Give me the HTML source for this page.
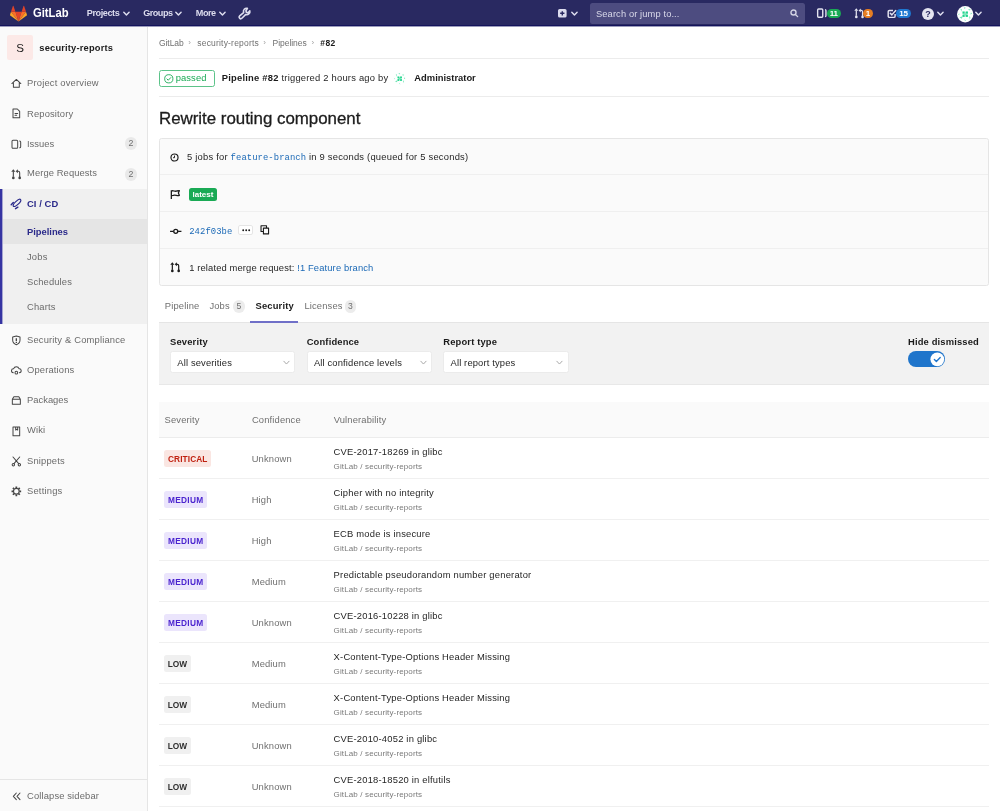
<!DOCTYPE html>
<html lang="en">
<head>
<meta charset="utf-8">
<title>Pipeline #82 · security-reports · GitLab</title>
<style>
*{box-sizing:border-box;margin:0;padding:0}
html,body{width:1000px;height:811px;overflow:hidden;background:#fff}
body{font-family:"Liberation Sans",sans-serif;font-size:9.4px;color:#262626;position:relative;letter-spacing:.15px}
#nav,#side,#main{will-change:transform}
#main{position:absolute;left:0;top:0;width:1000px;height:811px}
.abs{position:absolute;white-space:nowrap}
svg{position:absolute;overflow:visible}
#nav{position:absolute;left:0;top:0;width:1000px;height:26px;background:#292961;border-bottom:1px solid #14145c}
#nav:after{content:'';position:absolute;left:0;top:26px;width:1000px;height:1px;background:#9c9cbc}
#nav .t{position:absolute;color:#dcdcee;font-weight:bold;font-size:9.1px;top:7.9px;line-height:10px;white-space:nowrap;letter-spacing:-0.36px}
#brand{position:absolute;left:33.3px;top:5px;font-size:13.4px;font-weight:bold;color:#fff;line-height:16px;transform:scaleX(.84);transform-origin:0 0;letter-spacing:0}
#search{position:absolute;left:590px;top:3.2px;width:215px;height:20.6px;border-radius:2.5px;background:#4d4c80}
#search span{position:absolute;left:6px;top:6.2px;font-size:9.3px;line-height:11px;color:#dadaea;letter-spacing:.12px}
.pill{position:absolute;height:8.6px;border-radius:5px;color:#fff;font-size:8px;font-weight:bold;line-height:10.8px;text-align:center;top:9.2px;letter-spacing:-.2px;overflow:hidden}
#side{position:absolute;left:0;top:26.6px;width:148.1px;height:785px;background:#fafafa;border-right:1px solid #e5e5e5}
#side .it{position:absolute;left:27px;font-size:9.4px;line-height:12px;color:#6b6b6b;white-space:nowrap}
#side svg{left:10.5px}
.cnt{position:absolute;left:125px;width:12px;height:13.2px;border-radius:6px;background:#e9e9e9;color:#707070;font-size:8.8px;line-height:13.6px;text-align:center;letter-spacing:0}
a{color:#1b69b6;text-decoration:none}
b{color:#1a1a1a}
.hr{position:absolute;left:159px;width:830px;height:1px;background:#ececec}
.mono{font-family:"Liberation Mono",monospace;font-size:8.9px;letter-spacing:.07px}
.sev{position:absolute;height:16.8px;border-radius:2.5px;font-size:8.3px;font-weight:bold;line-height:18.2px;text-align:center}
.crit{background:#fae6e2;color:#c0200f;width:47.2px;letter-spacing:.09px;padding-left:.1px}
.med{background:#ebe5fc;color:#4b24cf;width:42.9px;letter-spacing:.29px;padding-left:.3px}
.low{background:#f0f0f0;color:#2e2e2e;width:26.5px;letter-spacing:0}
.row{position:absolute;left:159px;width:830px;height:41px;border-bottom:1px solid #f0f0f0}
.row .conf{position:absolute;left:92.7px;top:15.3px;font-size:9.4px;line-height:12px;color:#707070}
.row .vn{position:absolute;left:174.6px;top:8px;font-size:9.4px;line-height:12px;color:#1f1f1f;white-space:nowrap;letter-spacing:.21px}
.row .vp{position:absolute;left:174.6px;top:24.6px;font-size:8px;line-height:10px;color:#7a7a7a;white-space:nowrap;letter-spacing:.13px}
.row .sev{left:5.1px;top:12.3px}
</style>
</head>
<body>
<div id="nav">
<svg style="left:10.400px;top:5.800px" width="17" height="15.600" viewBox="0 0 36 33"><path fill="#e24329" d="M18 32.600l6.600-20.300H11.400z"/><path fill="#fc6d26" d="M18 32.600l-6.600-20.300H2.100z"/><path fill="#fca326" d="M2.100 12.300l-2 6.200a1.400 1.400 0 0 0 .5 1.500L18 32.600z"/><path fill="#e24329" d="M2.100 12.300h9.300L7.400.1a.7.7 0 0 0-1.300 0z"/><path fill="#fc6d26" d="M18 32.600l6.600-20.300h9.300z"/><path fill="#fca326" d="M33.900 12.300l2 6.200a1.400 1.400 0 0 1-.5 1.500L18 32.600z"/><path fill="#e24329" d="M33.900 12.300h-9.300L28.600.1a.7.7 0 0 1 1.300 0z"/></svg>
<div id="brand">GitLab</div>
<div class="t" style="left:86.800px;letter-spacing:-.42px">Projects</div><svg style="left:122.7px;top:11.4px" width="6.8" height="5.4" viewBox="0 0 6.8 5.4"><path d="M.8 1.200l2.650 2.850 2.650-2.850" fill="none" stroke="#dcdcee" stroke-width="1.45" stroke-linecap="round" stroke-linejoin="round"/></svg>
<div class="t" style="left:143.200px;letter-spacing:-.5px">Groups</div><svg style="left:174.5px;top:11.4px" width="6.8" height="5.4" viewBox="0 0 6.8 5.4"><path d="M.8 1.200l2.650 2.850 2.650-2.850" fill="none" stroke="#dcdcee" stroke-width="1.45" stroke-linecap="round" stroke-linejoin="round"/></svg>
<div class="t" style="left:195.800px;letter-spacing:-.48px">More</div><svg style="left:218.7px;top:11.4px" width="6.8" height="5.4" viewBox="0 0 6.8 5.4"><path d="M.8 1.200l2.650 2.850 2.650-2.850" fill="none" stroke="#dcdcee" stroke-width="1.45" stroke-linecap="round" stroke-linejoin="round"/></svg>
<svg style="left:238.400px;top:7.400px" width="13" height="12.400" viewBox="0 0 13.400 12.800"><path fill="none" stroke="#dcdcee" stroke-width="1.700" stroke-linejoin="round" stroke-linecap="round" d="M9.700 1.400a3.300 3.300 0 0 0-3.900 4.300L1.700 9.200a1.650 1.650 0 0 0 2.300 2.400l3.800-3.800a3.300 3.300 0 0 0 4.400-3.800L10.300 5.900 8.700 5.600 8.200 3.900z"/></svg>
<svg style="left:558px;top:9.200px" width="8.600" height="8.600" viewBox="0 0 16 16"><path fill="#dcdcee" fill-rule="evenodd" d="M3 0h10a3 3 0 0 1 3 3v10a3 3 0 0 1-3 3H3a3 3 0 0 1-3-3V3a3 3 0 0 1 3-3zm3.700 6.700H4v2.600h2.700V12h2.600V9.300H12V6.700H9.300V4H6.700z"/></svg><svg style="left:570.7px;top:11.4px" width="6.8" height="5.4" viewBox="0 0 6.8 5.4"><path d="M.8 1.200l2.650 2.850 2.650-2.850" fill="none" stroke="#dcdcee" stroke-width="1.45" stroke-linecap="round" stroke-linejoin="round"/></svg>
<div id="search"><span>Search or jump to...</span><svg style="left:199.500px;top:6.300px" width="8.600" height="8.600" viewBox="0 0 16 16"><path fill="none" stroke="#d3d3e3" stroke-width="2.600" stroke-linecap="round" d="M6.500 1.800a4.700 4.700 0 1 0 0 9.400a4.700 4.700 0 0 0 0-9.400zM10.200 10.200l4 4"/></svg></div>
<svg style="left:817.300px;top:8.400px" width="9.600" height="10.200" viewBox="0 0 15 16"><path fill="none" stroke="#e4e4f0" stroke-width="2.200" d="M2.500 1.500h5a1.500 1.500 0 0 1 1.500 1.500v10a1.500 1.500 0 0 1-1.500 1.500h-5a1.500 1.500 0 0 1-1.500-1.500V3a1.500 1.500 0 0 1 1.500-1.500zM12.500 2.500c1 0 1.500.8 1.500 1.500v8c0 .7-.5 1.500-1.500 1.500"/></svg>
<div class="pill" style="left:826.800px;width:14px;background:#1aaa55">11</div>
<svg style="left:853.500px;top:8.200px" width="10.500" height="10.800" viewBox="0 0 16 16"><path fill="#e4e4f0" d="M3.500 .3L6.600 4H0.400z"/><path stroke="#e4e4f0" stroke-width="1.9" d="M3.500 3.500v8"/><circle cx="3.500" cy="13.300" r="2" fill="#e4e4f0"/><path fill="none" stroke="#e4e4f0" stroke-width="1.9" d="M9.500 3.500h1.500a2 2 0 0 1 2 2V12"/><path fill="#e4e4f0" d="M10.300 .5v6L7 3.500z"/><circle cx="13" cy="13.300" r="2" fill="#e4e4f0"/></svg>
<div class="pill" style="left:862.800px;width:10.200px;background:#e67e22">1</div>
<svg style="left:887px;top:8.800px" width="9.600" height="9.600" viewBox="0 0 16 16"><path fill="none" stroke="#e4e4f0" stroke-width="2.400" d="M13.500 8.500V12a2 2 0 0 1-2 2H4a2 2 0 0 1-2-2V4.500a2 2 0 0 1 2-2h6"/><path fill="none" stroke="#e4e4f0" stroke-width="2.400" stroke-linecap="round" stroke-linejoin="round" d="M5.500 7.200l2.600 2.600L14.600 2.400"/></svg>
<div class="pill" style="left:896.200px;width:14.600px;background:#1f78d1">15</div>
<svg style="left:921.800px;top:7.600px" width="12" height="12" viewBox="0 0 16 16"><circle cx="8" cy="8" r="8" fill="#e4e4f0"/><text x="8" y="12.300" text-anchor="middle" font-family="Liberation Sans, sans-serif" font-weight="bold" font-size="12" fill="#292961">?</text></svg><svg style="left:936.5px;top:11.4px" width="6.8" height="5.4" viewBox="0 0 6.8 5.4"><path d="M.8 1.200l2.650 2.850 2.650-2.850" fill="none" stroke="#dcdcee" stroke-width="1.45" stroke-linecap="round" stroke-linejoin="round"/></svg>
<svg style="left:956.500px;top:5.600px" width="16.400" height="16.400" viewBox="0 0 24 24"><circle cx="12" cy="12" r="12" fill="#fdfffe"/><g fill="#1ed48c"><rect x="8" y="8" width="3.300" height="3.300"/><rect x="12.700" y="8" width="3.300" height="3.300"/><rect x="8" y="12.700" width="3.300" height="3.300"/><rect x="12.700" y="12.700" width="3.300" height="3.300"/></g><g fill="#6fe3b4"><path d="M5 4l2 .5-.5 4zM10 2l3 .5-2 2zM16 5l4-.5-1.500 2zM20.500 9.500l1.500 2-2.500 1zM17.500 15l2 1-.5 4zM11 19.500l2.500 2.500-2-.5zM3.500 16.500l5-1.500-1.500 3.500zM1.500 12l2.500-1-1 2zM11.300 9h1.400v6h-1.400zM9 11.300h6v1.400H9z"/></g></svg><svg style="left:975.3px;top:11.4px" width="6.8" height="5.4" viewBox="0 0 6.8 5.4"><path d="M.8 1.200l2.650 2.850 2.650-2.850" fill="none" stroke="#dcdcee" stroke-width="1.45" stroke-linecap="round" stroke-linejoin="round"/></svg>
</div>
<div id="side"><div style="position:absolute;left:7.300px;top:7.700px;width:25.400px;height:25.400px;border-radius:2px;background:#fce9e7;color:#2e2e2e;font-size:11.600px;line-height:26.200px;text-align:center;letter-spacing:0;color:#1a1a1a">S</div><div style="position:absolute;left:39.300px;top:15.200px;font-weight:bold;font-size:9.300px;line-height:12px;color:#1a1a1a;white-space:nowrap;letter-spacing:.19px">security-reports</div><svg style="top:50.7px" width="10.700" height="10.700" viewBox="0 0 16 16"><path fill="none" stroke="#444" stroke-width="1.500" stroke-linejoin="round" stroke-linecap="round" d="M1.300 8.300L8 2.200l6.700 6.100M3.600 7V13.700h8.800V7"/></svg><div class="it" style="top:50.4px;letter-spacing:0.19px">Project overview</div><svg style="top:81.0px" width="10.700" height="10.700" viewBox="0 0 16 16"><path fill="none" stroke="#444" stroke-width="1.500" stroke-linejoin="round" stroke-linecap="round" d="M3 1.500h6.500l3.500 3.500v9.500H3zM6 8.300h4M6 11h2.500"/></svg><div class="it" style="top:80.7px">Repository</div><svg style="top:111.5px" width="10.700" height="10.700" viewBox="0 0 16 16"><path fill="none" stroke="#444" stroke-width="1.500" stroke-linejoin="round" stroke-linecap="round" d="M3 2h5.500a1.500 1.500 0 0 1 1.500 1.500v9a1.500 1.500 0 0 1-1.500 1.500H3a1.500 1.500 0 0 1-1.500-1.500v-9A1.500 1.500 0 0 1 3 2zM13 3c1 0 1.500.7 1.500 1.500v7c0 .8-.5 1.500-1.500 1.500"/></svg><div class="it" style="top:111.2px;letter-spacing:0.02px">Issues</div><div class="cnt" style="top:110.200px">2</div><svg style="top:141.7px" width="10.700" height="10.700" viewBox="0 0 16 16"><path fill="#444" d="M3.500 .3L6.600 4H0.400z"/><path stroke="#444" stroke-width="1.6" d="M3.500 3.500v8"/><circle cx="3.500" cy="13.300" r="2" fill="#444"/><path fill="none" stroke="#444" stroke-width="1.6" d="M9.500 3.500h1.500a2 2 0 0 1 2 2V12"/><path fill="#444" d="M10.300 .5v6L7 3.500z"/><circle cx="13" cy="13.300" r="2" fill="#444"/></svg><div class="it" style="top:140.4px;letter-spacing:0.09px">Merge Requests</div><div class="cnt" style="top:140.500px">2</div><div style="position:absolute;left:0;top:162.200px;width:147.100px;height:135px;background:#f0f0f0"></div><div style="position:absolute;left:0;top:162.200px;width:2px;height:135px;background:#3634a2"></div><div style="position:absolute;left:2px;top:162.200px;width:1px;height:135px;background:#a6a5d1"></div><div style="position:absolute;left:3px;top:192.100px;width:144.100px;height:25px;background:#e5e5e5"></div><svg style="left:6px;top:167.400px" width="20" height="20" viewBox="0 0 20 20"><ellipse cx="11" cy="8.900" rx="4.900" ry="1.750" transform="rotate(-43 11 8.900)" fill="none" stroke="#2b2a8a" stroke-width="1.200"/><path d="M5.200 10.700l2.100-2.200M9.500 14.700l2.400-1.500" stroke="#2b2a8a" stroke-width="1.400" stroke-linecap="round"/></svg><div class="it" style="top:170.7px;color:#2b2a8a;font-weight:bold;letter-spacing:0.07px">CI / CD</div><div class="it" style="top:199.2px;color:#2b2a8a;font-weight:bold;letter-spacing:-0.02px">Pipelines</div><div class="it" style="top:224.2px;letter-spacing:0.17px">Jobs</div><div class="it" style="top:249.2px;letter-spacing:0.135px">Schedules</div><div class="it" style="top:274.2px;letter-spacing:0.19px">Charts</div><svg style="top:307.5px" width="10.700" height="10.700" viewBox="0 0 16 16"><path fill="none" stroke="#444" stroke-width="1.500" stroke-linejoin="round" stroke-linecap="round" d="M8 1.500l5.500 1.500v4.500c0 3.500-2.500 6-5.500 7-3-1-5.500-3.500-5.500-7V3z"/><path fill="#444" d="M7 5h2v4H7zM7 10h2v2H7z"/></svg><div class="it" style="top:307.2px;letter-spacing:0.17px">Security &amp; Compliance</div><svg style="top:338.0px" width="10.700" height="10.700" viewBox="0 0 16 16"><path fill="none" stroke="#444" stroke-width="1.500" stroke-linejoin="round" stroke-linecap="round" d="M3.500 11.500a3 3 0 0 1 .5-6 4.200 4.200 0 0 1 8 0 3 3 0 0 1 .5 6"/><circle cx="8" cy="11.500" r="2" fill="none" stroke="#444" stroke-width="1.500" stroke-linejoin="round" stroke-linecap="round"/></svg><div class="it" style="top:336.7px;letter-spacing:0.16px">Operations</div><svg style="top:368.2px" width="10.700" height="10.700" viewBox="0 0 16 16"><path fill="none" stroke="#444" stroke-width="1.500" stroke-linejoin="round" stroke-linecap="round" d="M2 6.500h12V14H2zM2 6.500L4.300 2.500h7.400L14 6.500"/></svg><div class="it" style="top:366.9px;letter-spacing:0.01px">Packages</div><svg style="top:398.5px" width="10.700" height="10.700" viewBox="0 0 16 16"><path fill="none" stroke="#444" stroke-width="1.500" stroke-linejoin="round" stroke-linecap="round" d="M3 1.500h10v13H3zM7 1.500V6l1.500-1L10 6V1.500"/></svg><div class="it" style="top:397.2px;letter-spacing:0.14px">Wiki</div><svg style="top:428.7px" width="10.700" height="10.700" viewBox="0 0 16 16"><path fill="none" stroke="#444" stroke-width="1.500" stroke-linejoin="round" stroke-linecap="round" d="M3 1.500l8.500 10M13 1.500l-8.500 10"/><circle cx="3.500" cy="13" r="1.800" fill="none" stroke="#444" stroke-width="1.500" stroke-linejoin="round" stroke-linecap="round"/><circle cx="12.500" cy="13" r="1.800" fill="none" stroke="#444" stroke-width="1.500" stroke-linejoin="round" stroke-linecap="round"/></svg><div class="it" style="top:428.4px;letter-spacing:0.16px">Snippets</div><svg style="top:459.0px" width="10.700" height="10.700" viewBox="0 0 16 16"><circle cx="8" cy="8" r="4.300" fill="none" stroke="#444" stroke-width="1.800"/><g stroke="#444" stroke-width="2.600"><path d="M8 .8v2.500M8 12.700v2.500M.8 8h2.500M12.700 8h2.500M2.900 2.900l1.800 1.800M11.300 11.300l1.800 1.800M2.900 13.100l1.800-1.800M11.300 4.700l1.800-1.800"/></g></svg><div class="it" style="top:457.9px;letter-spacing:0.2px">Settings</div><div style="position:absolute;left:0;top:752px;width:147.100px;height:1px;background:#e5e5e5"></div><svg style="top:763.5px" width="10.700" height="10.700" viewBox="0 0 16 16"><path fill="none" stroke="#444" stroke-width="1.500" stroke-linejoin="round" stroke-linecap="round" d="M8 3L3.500 8 8 13M13.500 3L9 8l4.500 5"/></svg><div class="it" style="top:763.2px;letter-spacing:0.135px">Collapse sidebar</div></div>
<div id="main"><div class="abs" style="left:159px;top:37.4px;font-size:8.5px;line-height:12px;color:#707070;font-weight:normal;letter-spacing:-0.07px;">GitLab</div><div class="abs" style="left:188.3px;top:37.0px;font-size:8px;line-height:12px;color:#a0a0a0;font-weight:normal;">›</div><div class="abs" style="left:197.3px;top:37.4px;font-size:8.5px;line-height:12px;color:#707070;font-weight:normal;letter-spacing:0.19px;">security-reports</div><div class="abs" style="left:263.3px;top:37.0px;font-size:8px;line-height:12px;color:#a0a0a0;font-weight:normal;">›</div><div class="abs" style="left:272.6px;top:37.4px;font-size:8.5px;line-height:12px;color:#707070;font-weight:normal;letter-spacing:-0.05px;">Pipelines</div><div class="abs" style="left:311.5px;top:37.0px;font-size:8px;line-height:12px;color:#a0a0a0;font-weight:normal;">›</div><div class="abs" style="left:320.3px;top:37.4px;font-size:8.5px;line-height:12px;color:#1a1a1a;font-weight:bold;letter-spacing:0.4px;">#82</div><div class="hr" style="top:58.300px"></div><div class="abs" style="left:159px;top:70px;width:55.600px;height:16.800px;border:1px solid #5cc389;border-radius:2.500px"></div><svg style="left:163.600px;top:73.600px" width="9.600" height="9.600" viewBox="0 0 14 14"><circle cx="7" cy="7" r="6" fill="none" stroke="#1aaa55" stroke-width="1.300"/><path d="M4.300 7.200l1.900 1.900 3.600-3.800" fill="none" stroke="#1aaa55" stroke-width="1.400" stroke-linecap="round" stroke-linejoin="round"/></svg><div class="abs" style="left:175.7px;top:72.4px;font-size:9.4px;line-height:12px;color:#1aaa55;font-weight:normal;letter-spacing:0.1px;">passed</div><div class="abs" style="left:221.7px;top:72.4px;font-size:9.4px;line-height:12px;color:#262626;font-weight:normal;letter-spacing:0.22px;"><b style="letter-spacing:.23px">Pipeline #82</b> triggered 2 hours ago by</div><svg style="left:393px;top:71.500px" width="13.400" height="13.400" viewBox="0 0 24 24"><circle cx="12" cy="12" r="12" fill="#fdfffe"/><g fill="#1ed48c"><rect x="8" y="8" width="3.300" height="3.300"/><rect x="12.700" y="8" width="3.300" height="3.300"/><rect x="8" y="12.700" width="3.300" height="3.300"/><rect x="12.700" y="12.700" width="3.300" height="3.300"/></g><g fill="#6fe3b4"><path d="M5 4l2 .5-.5 4zM10 2l3 .5-2 2zM16 5l4-.5-1.500 2zM20.500 9.500l1.500 2-2.500 1zM17.500 15l2 1-.5 4zM11 19.500l2.500 2.500-2-.5zM3.500 16.500l5-1.500-1.500 3.500zM1.500 12l2.500-1-1 2zM11.300 9h1.400v6h-1.400zM9 11.300h6v1.400H9z"/></g></svg><div class="abs" style="left:414.3px;top:72.4px;font-size:9.4px;line-height:12px;color:#1a1a1a;font-weight:bold;letter-spacing:0px;">Administrator</div><div class="hr" style="top:96px"></div><div class="abs" style="left:159px;top:108.0px;font-size:16.9px;line-height:22px;color:#1c1c1c;font-weight:normal;letter-spacing:-0.02px;-webkit-text-stroke:.3px #1c1c1c;">Rewrite routing component</div><div class="abs" style="left:159px;top:138px;width:830px;height:148px;background:#fafafa;border:1px solid #e5e5e5;border-radius:2.500px"></div><div class="abs" style="left:160px;top:174.3px;width:828px;height:1px;background:#efefef"></div><div class="abs" style="left:160px;top:210.8px;width:828px;height:1px;background:#efefef"></div><div class="abs" style="left:160px;top:247.8px;width:828px;height:1px;background:#efefef"></div><svg style="left:170.300px;top:152.600px" width="9" height="9" viewBox="0 0 14 14"><circle cx="7" cy="7" r="5.500" fill="none" stroke="#1a1a1a" stroke-width="1.800"/><path d="M7 4v3.300H4.800" fill="none" stroke="#1a1a1a" stroke-width="1.500"/></svg><div class="abs" style="left:187px;top:151.0px;font-size:9.4px;line-height:12px;color:#262626;font-weight:normal;letter-spacing:0.22px;">5 jobs for <a class="mono">feature-branch</a> in 9 seconds (queued for 5 seconds)</div><svg style="left:170.300px;top:188.500px" width="10.700" height="10.700" viewBox="0 0 16 16"><path fill="none" stroke="#1a1a1a" stroke-width="1.900" stroke-linejoin="round" d="M2 15V2M2 3c3-1.500 5 1.500 8 0l4-.5-1.500 3.500L14 9.500c-3 1.500-6-1.500-9 0L2 10"/></svg><div class="abs" style="left:189.200px;top:187.500px;width:27.600px;height:13px;border-radius:2.500px;background:#1aaa55;color:#fff;font-size:8px;font-weight:bold;line-height:13px;text-align:center;letter-spacing:0">latest</div><svg style="left:170px;top:225.500px" width="11.500" height="10.700" viewBox="0 0 17 16"><circle cx="8.500" cy="8" r="3" fill="none" stroke="#1a1a1a" stroke-width="2"/><path d="M0 8h5M12 8H17" stroke="#1a1a1a" stroke-width="2"/></svg><div class="abs" style="left:189.2px;top:224.6px;font-size:9.4px;line-height:12px;color:#262626;font-weight:normal;"><a class="mono">242f03be</a></div><div class="abs" style="left:238.300px;top:225px;width:14.800px;height:9.600px;border:1px solid #e5e5e5;border-radius:2px;background:#fff"></div><svg style="left:241.500px;top:228.800px" width="8.400" height="2.400" viewBox="0 0 8.400 2.400"><circle cx="1.200" cy="1.200" r=".95" fill="#1a1a1a"/><circle cx="4.200" cy="1.200" r=".95" fill="#1a1a1a"/><circle cx="7.200" cy="1.200" r=".95" fill="#1a1a1a"/></svg><svg style="left:260px;top:225.400px" width="9.600" height="9.600" viewBox="0 0 14 14"><path fill="none" stroke="#1a1a1a" stroke-width="1.600" stroke-linejoin="round" d="M5 4.500h7.500V13H5zM9.500 4V1H1.500v8.500H4.500"/></svg><svg style="left:170.300px;top:262px" width="10.700" height="10.700" viewBox="0 0 16 16"><path fill="#1a1a1a" d="M3.500 .3L6.600 4H0.400z"/><path stroke="#1a1a1a" stroke-width="1.8" d="M3.500 3.500v8"/><circle cx="3.500" cy="13.300" r="2" fill="#1a1a1a"/><path fill="none" stroke="#1a1a1a" stroke-width="1.8" d="M9.500 3.500h1.500a2 2 0 0 1 2 2V12"/><path fill="#1a1a1a" d="M10.300 .5v6L7 3.500z"/><circle cx="13" cy="13.300" r="2" fill="#1a1a1a"/></svg><div class="abs" style="left:189.2px;top:261.5px;font-size:9.4px;line-height:12px;color:#262626;font-weight:normal;letter-spacing:0.13px;">1 related merge request: <a>!1 Feature branch</a></div><div class="abs" style="left:164.8px;top:299.7px;font-size:9.4px;line-height:12px;color:#707070;font-weight:normal;">Pipeline</div><div class="abs" style="left:209.4px;top:299.7px;font-size:9.4px;line-height:12px;color:#707070;font-weight:normal;">Jobs</div><div class="abs" style="left:232.9px;top:300px;width:11.800px;height:13px;border-radius:6px;background:#ececec;color:#707070;font-size:8.600px;line-height:13.400px;text-align:center;letter-spacing:0">5</div><div class="abs" style="left:255.6px;top:299.7px;font-size:9.4px;line-height:12px;color:#1a1a1a;font-weight:bold;">Security</div><div class="abs" style="left:304.4px;top:299.7px;font-size:9.4px;line-height:12px;color:#707070;font-weight:normal;">Licenses</div><div class="abs" style="left:344.6px;top:300px;width:11.800px;height:13px;border-radius:6px;background:#ececec;color:#707070;font-size:8.600px;line-height:13.400px;text-align:center;letter-spacing:0">3</div><div class="hr" style="top:321.800px;background:#e5e5e5"></div><div class="abs" style="left:250px;top:321px;width:48.200px;height:2px;background:#7070c8"></div><div class="abs" style="left:159px;top:322.600px;width:830px;height:62.400px;background:#f2f2f2;border-bottom:1px solid #e8e8e8"></div><div class="abs" style="left:170.1px;top:335.8px;font-size:9.4px;line-height:12px;color:#1a1a1a;font-weight:bold;">Severity</div><div class="abs" style="left:170.1px;top:351.400px;width:125.400px;height:22px;background:#fff;border:1px solid #ebebeb;border-radius:2.500px"></div><div class="abs" style="left:177.29999999999998px;top:356.6px;font-size:9.4px;line-height:12px;color:#262626;font-weight:normal;">All severities</div><svg style="left:282.9px;top:359.8px" width="6.8" height="5.4" viewBox="0 0 6.8 5.4"><path d="M.8 1.200l2.650 2.850 2.650-2.850" fill="none" stroke="#a8a8a8" stroke-width="1" stroke-linecap="round" stroke-linejoin="round"/></svg><div class="abs" style="left:306.7px;top:335.8px;font-size:9.4px;line-height:12px;color:#1a1a1a;font-weight:bold;">Confidence</div><div class="abs" style="left:306.7px;top:351.400px;width:125.400px;height:22px;background:#fff;border:1px solid #ebebeb;border-radius:2.500px"></div><div class="abs" style="left:313.9px;top:356.6px;font-size:9.4px;line-height:12px;color:#262626;font-weight:normal;">All confidence levels</div><svg style="left:419.5px;top:359.8px" width="6.8" height="5.4" viewBox="0 0 6.8 5.4"><path d="M.8 1.200l2.650 2.850 2.650-2.850" fill="none" stroke="#a8a8a8" stroke-width="1" stroke-linecap="round" stroke-linejoin="round"/></svg><div class="abs" style="left:443.3px;top:335.8px;font-size:9.4px;line-height:12px;color:#1a1a1a;font-weight:bold;">Report type</div><div class="abs" style="left:443.3px;top:351.400px;width:125.400px;height:22px;background:#fff;border:1px solid #ebebeb;border-radius:2.500px"></div><div class="abs" style="left:450.5px;top:356.6px;font-size:9.4px;line-height:12px;color:#262626;font-weight:normal;">All report types</div><svg style="left:556.1px;top:359.8px" width="6.8" height="5.4" viewBox="0 0 6.8 5.4"><path d="M.8 1.200l2.650 2.850 2.650-2.850" fill="none" stroke="#a8a8a8" stroke-width="1" stroke-linecap="round" stroke-linejoin="round"/></svg><div class="abs" style="left:908px;top:335.5px;font-size:9.4px;line-height:12px;color:#1a1a1a;font-weight:bold;">Hide dismissed</div><div class="abs" style="left:908px;top:350.800px;width:37.300px;height:16.400px;border-radius:8.200px;background:#1f75cb"></div><svg style="left:930.300px;top:351.700px" width="14.600" height="14.600" viewBox="0 0 14 14"><circle cx="7" cy="7" r="6.600" fill="#fff"/><path d="M4.200 7.200l1.900 1.900 3.700-3.900" fill="none" stroke="#1f75cb" stroke-width="1.300" stroke-linecap="round" stroke-linejoin="round"/></svg><div class="abs" style="left:159px;top:401.700px;width:830px;height:36.400px;background:#fafafa;border-bottom:1px solid #ececec"></div><div class="abs" style="left:164.6px;top:414.0px;font-size:9.4px;line-height:12px;color:#707070;font-weight:normal;">Severity</div><div class="abs" style="left:251.9px;top:414.0px;font-size:9.4px;line-height:12px;color:#707070;font-weight:normal;">Confidence</div><div class="abs" style="left:333.7px;top:414.0px;font-size:9.4px;line-height:12px;color:#707070;font-weight:normal;">Vulnerability</div><div class="row" style="top:437.7px"><div class="sev crit">CRITICAL</div><div class="conf">Unknown</div><div class="vn">CVE-2017-18269 in glibc</div><div class="vp">GitLab / security-reports</div></div><div class="row" style="top:478.7px"><div class="sev med">MEDIUM</div><div class="conf">High</div><div class="vn">Cipher with no integrity</div><div class="vp">GitLab / security-reports</div></div><div class="row" style="top:519.7px"><div class="sev med">MEDIUM</div><div class="conf">High</div><div class="vn">ECB mode is insecure</div><div class="vp">GitLab / security-reports</div></div><div class="row" style="top:560.7px"><div class="sev med">MEDIUM</div><div class="conf">Medium</div><div class="vn">Predictable pseudorandom number generator</div><div class="vp">GitLab / security-reports</div></div><div class="row" style="top:601.7px"><div class="sev med">MEDIUM</div><div class="conf">Unknown</div><div class="vn">CVE-2016-10228 in glibc</div><div class="vp">GitLab / security-reports</div></div><div class="row" style="top:642.7px"><div class="sev low">LOW</div><div class="conf">Medium</div><div class="vn">X-Content-Type-Options Header Missing</div><div class="vp">GitLab / security-reports</div></div><div class="row" style="top:683.7px"><div class="sev low">LOW</div><div class="conf">Medium</div><div class="vn">X-Content-Type-Options Header Missing</div><div class="vp">GitLab / security-reports</div></div><div class="row" style="top:724.7px"><div class="sev low">LOW</div><div class="conf">Unknown</div><div class="vn">CVE-2010-4052 in glibc</div><div class="vp">GitLab / security-reports</div></div><div class="row" style="top:765.7px"><div class="sev low">LOW</div><div class="conf">Unknown</div><div class="vn">CVE-2018-18520 in elfutils</div><div class="vp">GitLab / security-reports</div></div><div class="row" style="top:806.7px"><div class="sev low">LOW</div><div class="conf">Unknown</div><div class="vn">CVE-2018-18521 in elfutils</div><div class="vp">GitLab / security-reports</div></div></div>
</body>
</html>
